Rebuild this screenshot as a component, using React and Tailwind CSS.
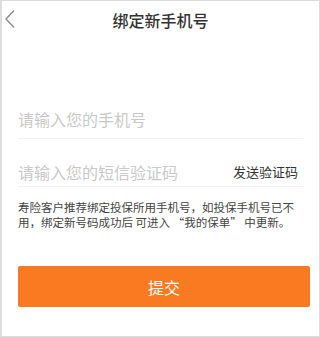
import { useState } from 'react'

const FONT = { fontFamily: '"Noto Sans CJK SC", "Noto Sans", sans-serif' }

export default function App() {
  const [phone, setPhone] = useState('')
  const [code, setCode] = useState('')

  return (
    <div
      style={FONT}
      className="w-[320px] h-[337px] bg-white border border-[#dcdcdc] border-l-2 flex flex-col overflow-hidden"
    >
      {/* Header */}
      <div className="relative h-[36px] flex items-center justify-center shrink-0">
        <button className="absolute left-[2px] top-[8px] p-0">
          <svg width="12" height="20" viewBox="0 0 12 20" fill="none">
            <path d="M10 1.5 L2 10 L10 18.5" stroke="#8a8a8a" strokeWidth="1.4" />
          </svg>
        </button>
        <h1 className="text-[16px] font-medium text-[#333] leading-none mt-[1px]">绑定新手机号</h1>
      </div>

      <div className="px-[16px] flex flex-col">
        {/* Phone */}
        <div className="mt-[62px] pt-[8px] pb-[7px] border-b border-[#f1f1f1]">
          <input
            value={phone}
            onChange={(e) => setPhone(e.target.value)}
            placeholder="请输入您的手机号"
            className="w-full text-[16px] leading-[20px] text-[#333] placeholder:text-[#c9c9c9] outline-none bg-transparent"
          />
        </div>

        {/* SMS code */}
        <div className="pt-[23px] pb-[4px] border-b border-[#f1f1f1] flex items-center">
          <input
            value={code}
            onChange={(e) => setCode(e.target.value)}
            placeholder="请输入您的短信验证码"
            className="flex-1 min-w-0 text-[16px] leading-[20px] text-[#333] placeholder:text-[#c9c9c9] outline-none bg-transparent"
          />
          <button className="text-[13px] leading-[20px] text-[#333] mr-[5px] shrink-0">发送验证码</button>
        </div>

        {/* Notice */}
        <p className="mt-[13px] text-[11.5px] leading-[15px] text-[#444] whitespace-nowrap">
          寿险客户推荐绑定投保所用手机号，如投保手机号已不
          <br />
          用，绑定新号码成功后 可进入 “我的保单” 中更新。
        </p>

        {/* Submit */}
        <button className="mt-[36px] h-[41px] w-[292px] bg-[#fa7a22] rounded-[2px] text-white text-[16px] flex items-center justify-center">
          提交
        </button>
      </div>
    </div>
  )
}
